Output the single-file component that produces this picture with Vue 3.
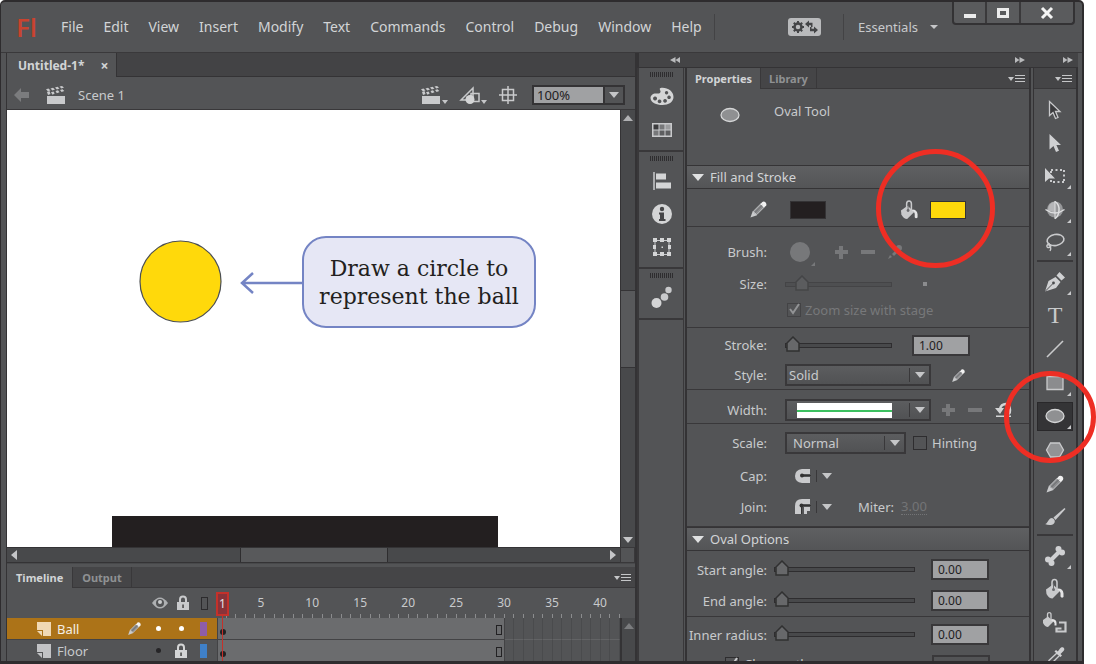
<script setup>
import { ref } from 'vue'

const menus = ['File', 'Edit', 'View', 'Insert', 'Modify', 'Text', 'Commands', 'Control', 'Debug', 'Window', 'Help']

const zoom = ref('100%')
const strokeSize = ref('1.00')
const stroke = ref(0)
const brushSize = ref(10)
const ovalRows = ref([
  { id: 'start-angle', label: 'Start angle:', pos: 0, value: '0.00' },
  { id: 'end-angle', label: 'End angle:', pos: 0, value: '0.00' },
  { id: 'inner-radius', label: 'Inner radius:', pos: 0, value: '0.00' }
])

const L = '#c9cacc'
const icons = {
  clapper: `<path fill="${L}" d="M1 10h18v8H1zM1 6l2.5-.9 1 3L2 9zM5 6.200l2.500-.7 1.200 2L6.500 8.800zM9.500 5l2.500-.7 1.500 2-2.700 1zM14 4l2.500-.7 1.800 1.700L15.600 6zM0 3.200l2.500-.7 2 2-2.700.8zM4.500 2.400l2.500-.6 2 1.800-2.600.8zM9 1.400l2.500-.6 2 1.800-2.600.8zM13.500.6L16 0l2 1.600-2.600.8z"/>`,
  pencil: `<path fill="#8b8c8e" stroke="${L}" d="M4.500 12l8-8 3.500 3.500-8 8z"/><path fill="${L}" d="M1.500 18.500l2.500-7 4.500 4.500z"/><path fill="#f2f2f2" d="M12 4.500l2-2.500a3 3 0 0 1 4 4l-2.300 2z"/><path stroke="#66676a" d="M6 13.500l8-8"/>`,
  bucket: `<path fill="${L}" d="M1 10.500l7-5 7 6.500-7.500 7.500q-3.500 0-6-4.500z"/><path fill="none" stroke="${L}" stroke-width="1.600" d="M7 11V3.500C7-.5 12-.5 12 3.500V10"/><circle cx="8.500" cy="10.500" r="1.500" fill="#6a6b6e"/><path fill="none" stroke="#6a6b6e" d="M8.500 10V4.500"/><path fill="#e4e4e5" d="M13 9.500q5 0 5.500 5v3.500q-2 1.500-3-.5v-3.500q0-2-3-3.500z"/>`,
  palette: `<path fill="#d4d5d6" fill-rule="evenodd" d="M10.500 1C17 0 23.500 4 23.500 10c0 5-5 8-11 8S.5 15.500.5 11c0-3 3-5 6-4.500 2.500.4 4.500-.5 4-2.500-.3-1-1.500-2.300 0-3zM5 9.500a2 2 0 1 0 .1 0zM9.500 12.500a1.900 1.900 0 1 0 .1 0zM15 12a1.900 1.900 0 1 0 .1 0zM19 8.500a1.800 1.800 0 1 0 .1 0zM16.500 4a1.700 1.700 0 1 0 .1 0z"/>`,
  swatches: `<path fill="${L}" d="M2 3h20v14H2z"/><path fill="#3c3c3e" d="M3.500 4.500h5v5h-5z"/><path fill="#77787a" d="M9.500 4.500h5v5h-5zM3.500 10.500h5v5h-5z"/><path fill="#9b9c9e" d="M15.500 4.500h5v5h-5z"/><path fill="#5d5e60" d="M9.500 10.500h5v5h-5zM15.500 10.500h5v5h-5z"/>`,
  align: `<path stroke="${L}" stroke-width="1.500" d="M4 1v18"/><path fill="#d4d5d6" d="M6 2.500h10v6H6zM6 11.500h15v6H6z"/>`,
  info: `<circle cx="12" cy="10" r="10" fill="#d4d5d6"/><circle cx="12" cy="5" r="2.200" fill="#454547"/><path fill="#454547" d="M9 8.500h5v6.500h1.500V17H9v-2h1V10.500H9z"/>`,
  transform: `<path fill="none" stroke="${L}" d="M5 3.500h14v14H5z"/><path fill="#d4d5d6" d="M3 1h4v4H3zM10 1h4v4h-4zM17 1h4v4h-4zM3 8h3v4H3zM18 8h3v4h-3zM3 15h4v4H3zM10 15h4v4h-4zM17 15h4v4h-4zM11.500 9.500h1.500V11h-1.500z"/>`,
  motion: `<circle cx="6.500" cy="15" r="5" fill="#d4d5d6"/><circle cx="14.500" cy="9" r="3.800" fill="${L}"/><circle cx="18.500" cy="2" r="3.200" fill="${L}"/>`,
  subselect: `<path fill="#3b3b3d" stroke="${L}" stroke-width="1.300" d="M4.500 1.500v14l3.500-3 2.500 6 2.500-1-2.500-6H15z"/>`,
  select: `<path fill="#d0d1d3" d="M4.500 1v15.500l4-3.500 2.500 6 3-1.300-2.600-5.700H16z"/>`,
  freeform: `<path fill="none" stroke="${L}" stroke-width="2" stroke-dasharray="2 2.500" d="M6 4h13M19 4v12M19 16H6M6 16V5"/><path fill="#d0d1d3" d="M0 2v14l4-3.500h6z"/>`,
  rotate3d: `<circle cx="10" cy="9.500" r="8" fill="#97989a"/><path fill="#b5b6b8" d="M10 1.500a8 8 0 0 0-7 9l7 2z"/><path fill="none" stroke="#dedfe0" stroke-width="1.300" d="M.5 9.500q9.500 7 19 0"/><path fill="none" stroke="#dedfe0" stroke-width="1.500" d="M10 1.500q4.500 3 4 9-.5 6-4 8"/><path fill="none" stroke="#dedfe0" d="M10 1v18"/>`,
  lasso: `<ellipse cx="10.500" cy="7" rx="8.500" ry="5.500" fill="none" stroke="${L}" stroke-width="1.600" transform="rotate(-10 10.500 7)"/><path fill="none" stroke="${L}" stroke-width="1.400" d="M5 11c-4 0-4 4-1 3.500s2-3.500 0-2.500c2 2 2.500 3.500 1 6"/>`,
  pen: `<path fill="#d0d1d3" d="M0 19.500L3.500 9l7-4 5 5-4.500 6zM11.500 3.500L14.500 0 20 5.500 16.500 8.500z"/><path stroke="#515254" d="M0 19.500l8-8"/><circle cx="8.500" cy="11" r="1.400" fill="#48494b"/>`,
  line: `<path stroke="${L}" stroke-width="1.600" d="M2 18L18 2"/>`,
  rect: `<path fill="#8b8c8e" stroke="${L}" stroke-width="1.300" d="M2 3.500h16v13H2z"/>`,
  oval: `<ellipse cx="10" cy="10" rx="9" ry="6.500" fill="#8f9092" stroke="#d4d5d6" stroke-width="1.300"/>`,
  poly: `<path fill="#929395" stroke="${L}" stroke-width="1.300" d="M1.500 10L5.500 3h9l4 7-4 7h-9z"/>`,
  brush: `<path fill="${L}" d="M0 17c3 0 3-6 7-6 3 1 3.500 4 2 5.500-2 2-6 2-9 .5z"/><path fill="${L}" d="M8.500 10.500L19.500 1 20.500 2 10.500 13z"/>`,
  bone: `<path stroke="#d0d1d3" stroke-width="4" d="M5 15L15 5"/><circle cx="3" cy="13.500" r="3" fill="#d0d1d3"/><circle cx="6.500" cy="17" r="3" fill="#d0d1d3"/><circle cx="13.500" cy="3" r="3" fill="#d0d1d3"/><circle cx="17" cy="6.500" r="3" fill="#d0d1d3"/>`,
  ink: `<path fill="${L}" d="M-2 7l5-3.500 5.500 5-5.500 5.500q-3 0-5-4z"/><path fill="none" stroke="${L}" stroke-width="1.300" d="M2.500 7V1.500c0-2.500 3.500-2.500 3.500 0V7"/><path fill="#e4e4e5" d="M6.500 6q5 0 5 4v2.500h-2V10q-1-2-3-2z"/><path fill="none" stroke="${L}" stroke-width="2.200" d="M14 9.500h6.500v9h-9v-3h5"/>`,
  dropper: `<path fill="none" stroke="${L}" stroke-width="1.400" d="M2 20l2-5.500L12 7l2.500 2.500-8 8z"/><path fill="#d0d1d3" d="M9.500 5.500L11 4l1.800 1.500L15 2.500C17-.5 21 2 18.500 5L15.500 8 17 9.500 15.500 11z"/>`
}

const docks = [
  [['palette', 'Color'], ['swatches', 'Swatches']],
  [['align', 'Align'], ['info', 'Info'], ['transform', 'Transform']],
  [['motion', 'Motion Presets']]
]

const toolGroups = [
  { cls: 'g1', tools: [['subselect', 'Selection'], ['select', 'Subselection'], ['freeform', 'Free Transform', 1], ['rotate3d', '3D Rotation', 1], ['lasso', 'Lasso', 1]] },
  { cls: 'g2', tools: [['pen', 'Pen', 1], ['text', 'Text'], ['line', 'Line'], ['rect', 'Rectangle', 1], ['oval', 'Oval', 1], ['poly', 'PolyStar'], ['pencil', 'Pencil'], ['brush', 'Brush']] },
  { cls: 'g3', tools: [['bone', 'Bone', 1], ['bucket', 'Paint Bucket'], ['ink', 'Ink Bottle'], ['dropper', 'Eyedropper']] }
]
const activeTool = ref('oval')

const frameCount = 42
const frames = Array.from({ length: frameCount }, (_, i) => i + 1)
const layers = [
  { name: 'Ball', active: true, locked: false, color: 'purple' },
  { name: 'Floor', active: false, locked: true, color: 'blue' }
]
</script>

<template>
  <div class="screen">
    <div class="window">
      <header class="titlebar">
        <span class="logo">Fl</span>
        <nav class="menu">
          <button v-for="m in menus" :key="m" type="button">{{ m }}</button>
        </nav>
        <div class="workspace">
          <button class="sync" type="button" aria-label="Sync settings">
            <svg width="28" height="14" viewBox="0 0 28 14">
              <circle cx="7" cy="7" r="3.500" fill="none" stroke="#444547" stroke-width="2.500" />
              <path d="M7 1v2.500M7 10.500V13M1 7h2.500M10.500 7H13M2.800 2.800l1.700 1.700M9.500 9.500l1.700 1.700M11.200 2.800L9.500 4.500M4.500 9.500l-1.700 1.700" stroke="#444547" stroke-width="2" />
              <path d="M14 4l4-3.500v2.300h3.500V7H20V5.200h-2v2.300zM27 10l-4-3.500v2.300h-2.500V7H19v4.200h4v2.300z" fill="#444547" />
            </svg>
          </button>
          <button class="essentials" type="button">Essentials <i class="down small"></i></button>
        </div>
        <div class="winbuttons">
          <button type="button" aria-label="Minimize"><svg width="14" height="14"><path d="M1 8h12v4H1z" fill="#ececec" /></svg></button>
          <button type="button" aria-label="Maximize"><svg width="14" height="14"><path d="M2.500 3.500h9v7h-9z" fill="none" stroke="#ececec" stroke-width="3" /></svg></button>
          <button class="close" type="button" aria-label="Close"><svg width="14" height="14"><path d="M2 2l10 10M12 2L2 12" stroke="#f4f4f4" stroke-width="3" /></svg></button>
        </div>
      </header>

      <div class="body">
        <main class="document">
          <div class="doctabs">
            <div class="doctab">Untitled-1* <button type="button" aria-label="Close document">×</button></div>
          </div>
          <div class="scenebar">
            <svg width="16" height="14" viewBox="0 0 16 14"><path d="M0 7l7-7v4h8v6H7v4z" fill="#7b7c7e" /></svg>
            <svg class="clap" width="20" height="18" viewBox="0 0 20 18" v-html="icons.clapper"></svg>
            <span class="scene">Scene 1</span>
            <button type="button" class="barbtn" aria-label="Edit scene">
              <svg width="20" height="18" viewBox="0 0 20 18" v-html="icons.clapper"></svg><i class="down tiny"></i>
            </button>
            <button type="button" class="barbtn" aria-label="Edit symbols">
              <svg width="20" height="18" viewBox="0 0 20 18">
                <path d="M1 14L13 2v12z" fill="none" stroke="#c9cacc" stroke-width="1.500" />
                <path d="M11 7.500h8v8h-8z" fill="none" stroke="#c9cacc" stroke-width="1.500" />
                <circle cx="10" cy="13.500" r="4.500" fill="#d4d5d6" />
              </svg><i class="down tiny"></i>
            </button>
            <button type="button" class="barbtn center" aria-label="Center stage">
              <svg width="18" height="18" viewBox="0 0 18 18"><path d="M3.500 3.500h11v11h-11zM9 0v18M0 9h18" fill="none" stroke="#c9cacc" stroke-width="1.500" /></svg>
            </button>
            <div class="zoom">
              <input v-model="zoom" type="text" aria-label="Zoom" />
              <button type="button" aria-label="Zoom levels"><i class="down"></i></button>
            </div>
          </div>

          <div class="stagegrid">
            <div class="stage">
              <div class="floor"></div>
              <svg class="ball" width="83" height="83"><circle cx="41.500" cy="41.500" r="40.500" fill="#ffd90b" stroke="#4c4f52" stroke-width="1.200" /></svg>
              <svg class="arrow" width="66" height="24"><path d="M65 12H3M14 2L3 12l11 10" fill="none" stroke="#7484c4" stroke-width="2.500" /></svg>
              <p class="callout">Draw a circle to<br />represent the ball</p>
            </div>
            <div class="vscroll">
              <i class="up"></i><div class="vthumb"></div><i class="down"></i>
            </div>
            <div class="hscroll">
              <i class="left"></i><div class="hthumb"></div><i class="right"></i>
            </div>
            <div class="corner"></div>
          </div>

          <section class="timeline">
            <div class="paneltabs">
              <button type="button" class="on">Timeline</button>
              <button type="button">Output</button>
              <button type="button" class="flyout" aria-label="Timeline menu"><i class="down tiny"></i><i class="lines"></i></button>
            </div>
            <div class="tlgrid">
              <div class="layerhead">
                <svg width="16" height="12" viewBox="0 0 16 12"><path d="M0 6q8-11 16 0-8 11-16 0z" fill="#aeb0b2" /><circle cx="8" cy="6" r="4" fill="#535456" /><circle cx="8" cy="5" r="2" fill="#c9cacc" /></svg>
                <svg class="headlock" width="14" height="16" viewBox="0 0 14 16"><path d="M4 8V4.500q0-3 3-3t3 3V8" fill="none" stroke="#c9cacc" stroke-width="2" /><path d="M1 7h12v8H1z" fill="#c9cacc" /><path d="M6.300 9.500h1.500v3.500H6.300z" fill="#444" /></svg>
                <span class="outline"></span>
              </div>
              <div class="ruler">
                <span v-for="f in frames" :key="f" class="tick"><span v-if="f % 5 === 0">{{ f }}</span></span>
                <span class="playhead">1</span>
              </div>
              <div class="rulerend"></div>
              <template v-for="l in layers" :key="l.name">
                <div class="layer" :class="{ active: l.active }">
                  <svg width="16" height="16" viewBox="0 0 16 16"><path d="M1 1h14v14H7V9H1z" :fill="l.active ? '#f0d9b5' : '#c2c3c5'" /><path d="M1 10h5v5z" :fill="l.active ? '#f0d9b5' : '#c2c3c5'" /></svg>
                  <span class="lname">{{ l.name }}</span>
                  <svg v-if="l.active" class="lpencil" width="15" height="15" viewBox="0 0 20 20" v-html="icons.pencil"></svg>
                  <i class="dot" :class="{ dark: !l.active }"></i>
                  <svg v-if="l.locked" class="lock" width="14" height="16" viewBox="0 0 14 16"><path d="M4 8V4.500q0-3 3-3t3 3V8" fill="none" stroke="#d4d5d6" stroke-width="2" /><path d="M1 7h12v8H1z" fill="#d4d5d6" /><path d="M6.300 9.500h1.500v3.500H6.300z" fill="#444" /></svg>
                  <span v-else class="lock"><i class="dot"></i></span>
                  <i class="chip" :class="l.color"></i>
                </div>
                <div class="frames">
                  <span v-for="f in frames" :key="f" class="cell" :style="{ gridColumn: f }"></span>
                  <div class="span"><i class="key"></i><i class="lastkey"></i></div>
                </div>
                <div class="tlscroll"><i v-if="l.active" class="up dim"></i></div>
              </template>
            </div>
          </section>
        </main>

        <div class="side">
          <div class="collapse">
            <i class="chev back dockchev"></i><i class="chev propchev"></i><i class="chev toolchev"></i>
          </div>
          <div class="columns">
            <div class="dock">
              <div v-for="(g, i) in docks" :key="i" class="dockgroup">
                <i class="grip"></i>
                <button v-for="[id, name] in g" :key="id" type="button" :aria-label="name">
                  <svg width="24" height="20" viewBox="0 0 24 20" v-html="icons[id]"></svg>
                </button>
              </div>
            </div>

            <section class="props">
              <div class="paneltabs">
                <button type="button" class="on">Properties</button>
                <button type="button">Library</button>
                <button type="button" class="flyout" aria-label="Panel menu"><i class="down tiny"></i><i class="lines"></i></button>
              </div>
              <div class="toolname">
                <svg width="20" height="20" viewBox="0 0 20 20" v-html="icons.oval"></svg>
                <span>Oval Tool</span>
              </div>

              <h2><i class="down big"></i>Fill and Stroke</h2>
              <div class="block colors">
                <svg width="19" height="19" viewBox="0 0 20 20" v-html="icons.pencil"></svg>
                <button type="button" class="swatch black" aria-label="Stroke color"></button>
                <svg class="fillicon" width="19" height="20" viewBox="0 0 20 20" v-html="icons.bucket"></svg>
                <button type="button" class="swatch yellow" aria-label="Fill color"></button>
              </div>

              <div class="block brushes">
                <div class="row">
                  <span class="lab">Brush:</span>
                  <svg class="brushicons" width="122" height="26" viewBox="0 0 122 26" fill="#77787a">
                    <circle cx="15" cy="13" r="10" /><path d="M30 23v4h-4z" />
                    <path d="M50 11h4V7h4v4h5v4h-5v5h-4v-5h-4zM76 11h14v4H76z" />
                    <circle cx="114" cy="9" r="3" /><path d="M103 20l2-4 2 2zM107 15l4-4 2 2-4 4z" />
                  </svg>
                </div>
                <div class="row">
                  <label class="lab" for="bsize">Size:</label>
                  <input id="bsize" v-model="brushSize" class="range short faded" type="range" disabled />
                  <i class="sizedot"></i>
                </div>
                <label class="check zoomcheck"><input type="checkbox" checked disabled /><svg width="14" height="14"><path d="M3 6l3 4 6-9" fill="none" stroke="#929395" stroke-width="2" /></svg>Zoom size with stage</label>
              </div>

              <div class="block strokes">
                <div class="row">
                  <label class="lab" for="stroke">Stroke:</label>
                  <input id="stroke" v-model="stroke" class="range short" type="range" />
                  <input v-model="strokeSize" class="num" type="text" aria-label="Stroke size" />
                </div>
                <div class="row">
                  <label class="lab" for="style">Style:</label>
                  <div class="select w1"><select id="style"><option>Solid</option></select><i class="down"></i></div>
                  <svg class="editstyle" width="15" height="15" viewBox="0 0 20 20" v-html="icons.pencil"></svg>
                </div>
              </div>

              <div class="block widths">
                <div class="row">
                  <span class="lab">Width:</span>
                  <button type="button" class="select w1 profile" aria-label="Width profile"><span class="preview"></span><i class="down"></i></button>
                  <svg class="widthicons" width="72" height="16" viewBox="0 0 72 16">
                    <path d="M1 6h4V2h4v4h5v4H9v4H5v-4H1zM27 6h14v4H27z" fill="#77787a" />
                    <path d="M59 7q1-5 6-5 4 1 4 6t-3 3" fill="none" stroke="#d4d5d6" stroke-width="2.500" />
                    <path d="M54 6h9l-4 6zM55 13.500h15v1.500H55z" fill="#d4d5d6" />
                  </svg>
                </div>
              </div>

              <div class="block scales">
                <div class="row">
                  <label class="lab" for="scale">Scale:</label>
                  <div class="select w2"><select id="scale"><option>Normal</option></select><i class="down"></i></div>
                  <label class="check"><input type="checkbox" />Hinting</label>
                </div>
                <div class="row">
                  <span class="lab">Cap:</span>
                  <button type="button" class="shape" aria-label="Cap">
                    <svg width="16" height="14"><path d="M15 0v5H7v3h8v6H7Q0 13 0 7t7-7z" fill="#c9cacc" /><path d="M7 6.500h9" stroke="#333" /><circle cx="7" cy="6.500" r="2" fill="#333" /></svg>
                    <i class="bar"></i><i class="down"></i>
                  </button>
                </div>
                <div class="row">
                  <span class="lab">Join:</span>
                  <button type="button" class="shape" aria-label="Join">
                    <svg width="16" height="15"><path d="M0 15V7q0-7 7-7h8v5H7v10zM9 8h6v4h-3v3H9z" fill="#c9cacc" /><path d="M6.500 15V6.500H16" fill="none" stroke="#333" /><circle cx="6.500" cy="6.500" r="2" fill="#333" /></svg>
                    <i class="bar"></i><i class="down"></i>
                  </button>
                  <span class="miter">Miter:</span><span class="mval">3.00</span>
                </div>
              </div>

              <h2><i class="down big"></i>Oval Options</h2>
              <div class="ovals">
                <div v-for="r in ovalRows" :key="r.id" class="row" :class="r.id">
                  <label class="lab" :for="r.id">{{ r.label }}</label>
                  <input :id="r.id" v-model="r.pos" class="range" type="range" />
                  <input v-model="r.value" class="num" type="text" :aria-label="r.label" />
                </div>
                <div class="row last">
                  <label class="check"><input type="checkbox" checked /><svg width="14" height="14"><path d="M3 6l3 4 6-9" fill="none" stroke="#c9cacc" stroke-width="2" /></svg>Close path</label>
                  <button type="button" class="reset">Reset</button>
                </div>
              </div>
            </section>

            <aside class="tools">
              <div class="paneltabs"><button type="button" class="flyout" aria-label="Tools menu"><i class="down tiny"></i><i class="lines"></i></button></div>
              <div v-for="g in toolGroups" :key="g.cls" class="toolgroup" :class="g.cls">
                <button v-for="[id, name, more] in g.tools" :key="id" type="button" :class="{ on: id === activeTool }" :aria-label="name" @click="activeTool = id">
                  <span v-if="id === 'text'" class="tee">T</span>
                  <svg v-else width="20" height="20" viewBox="0 0 20 20" v-html="icons[id]"></svg>
                  <i v-if="more" class="more"></i>
                </button>
              </div>
            </aside>
          </div>
        </div>
      </div>
    </div>
    <div class="ring fillring"></div>
    <div class="ring toolring"></div>
  </div>
</template>

<style>
html, body { margin: 0; background: #fff; }
</style>

<style scoped>
* { box-sizing: border-box; }
.screen { position: relative; height: 100vh; padding-right: 12px; overflow: hidden; font: 13px/18px "Noto Sans", "Open Sans", sans-serif; color: #c8cacc; }
button { margin: 0; padding: 0; border: 0; background: none; color: inherit; font: inherit; }
input, select { margin: 0; font: inherit; color: inherit; border-radius: 0; }
svg { display: block; flex: none; overflow: visible; }
i { display: block; flex: none; }
.window { height: 100%; display: flex; flex-direction: column; background: #535456; border: solid #2e2c2e; border-width: 2px 2px 3px 1px; border-radius: 5px 5px 0 0; overflow: hidden; }

.down, .up, .left, .right { width: 0; height: 0; border: 5px solid transparent; }
.down { border-top: 6px solid #c5c6c8; border-bottom: 0; }
.up { border-bottom: 6px solid #b0b1b3; border-top: 0; }
.up.dim { border-bottom-color: #7b7c7e; }
.left { border-right: 6px solid #c5c6c8; border-left: 0; }
.right { border-left: 6px solid #c5c6c8; border-right: 0; }
.down.small { border-width: 4px 4px 0; }
.down.tiny { border-width: 4px 3px 0; }
.down.big { border-width: 7px 6px 0; border-top-color: #e0e1e2; }

.titlebar { flex: none; height: 51px; display: flex; align-items: center; padding-left: 15px; border-bottom: 1px solid #3a393b; }
.logo { width: 45px; font: 26px/30px "Open Sans", sans-serif; color: #c9432f; font-weight: 600; }
.menu { display: flex; gap: 20px; font-size: 14px; color: #d2d4d6; }
.workspace { margin-left: auto; display: flex; align-items: center; height: 26px; padding-left: 73px; border-left: 1px solid #434345; }
.sync { width: 33px; height: 18px; display: grid; place-items: center; border-radius: 3px; background: #b9babc; }
.essentials { height: 26px; margin-left: 22px; padding-left: 14px; border-left: 1px solid #434345; display: flex; align-items: center; gap: 12px; }
.winbuttons { align-self: flex-start; display: flex; width: 123px; height: 23px; margin: 0 7px 0 14px; border: 2px solid #333234; border-top: 0; border-radius: 0 0 4px 4px; background: #5a5b5d; }
.winbuttons button { flex: 33; display: grid; place-items: center; border-right: 2px solid #3a393b; }
.winbuttons .close { flex: 55; border: 0; }

.body { flex: 1; min-height: 0; display: flex; padding: 0 4px 0 5px; }
.document { flex: 1; min-width: 0; display: flex; flex-direction: column; border: solid #343335; border-width: 0 2px 0 1px; }
.doctabs { flex: none; height: 24px; display: flex; background: #434345; border-bottom: 1px solid #343335; }
.doctab { height: 24px; display: flex; align-items: center; gap: 16px; padding: 2px 8px 0 11px; background: #535456; border-right: 1px solid #343335; font-size: 12px; font-weight: 700; color: #d2d4d6; }
.doctab button { font-size: 14px; }
.scenebar { flex: none; height: 33px; display: flex; align-items: center; padding: 3px 10px 0 7px; border-bottom: 1px solid #39383a; }
.clap { margin-left: 16px; }
.scene { flex: 1; margin-left: 12px; }
.barbtn { display: flex; align-items: flex-end; gap: 1px; margin-right: 12px; }
.barbtn.center { margin-right: 15px; }
.zoom { display: flex; width: 93px; height: 20px; border: 2px solid #343335; }
.zoom input { width: 71px; min-width: 0; padding: 0 3px; border: 0; border-right: 2px solid #343335; background: #a0a1a3; color: #1f2022; }
.zoom button { flex: 1; display: grid; place-items: center; }

.stagegrid { flex: 1; min-height: 0; display: grid; grid-template: 1fr 16px / 1fr 15px; }
.stage { position: relative; background: #fff; overflow: hidden; }
.ball { position: absolute; left: 132px; top: 130px; }
.floor { position: absolute; left: 105px; bottom: 0; width: 386px; height: 31px; background: #231f20; }
.arrow { position: absolute; left: 232px; top: 161px; }
.callout { position: absolute; left: 295px; top: 126px; width: 234px; height: 92px; margin: 0; padding-top: 17px; border: 2px solid #7484c4; border-radius: 24px; background: #e6e7f5; text-align: center; font: 22px/28px "DejaVu Serif", serif; color: #231f20; white-space: nowrap; }
.vscroll { display: flex; flex-direction: column; align-items: center; padding: 5px 0 4px; background: #48494b; border-left: 1px solid #343335; }
.vthumb { width: 100%; height: 78px; margin: auto 0; background: #58595b; border: 1px solid #343335; border-width: 1px 0; }
.hscroll { display: flex; align-items: center; padding: 0 4px; background: #48494b; border: solid #343335; border-width: 1px 0; }
.hthumb { height: 100%; width: 148px; margin: 0 auto; background: #58595b; border: solid #2e2d2f; border-width: 0 1px; }
.corner { border: 1px solid #39383a; }

.timeline { flex: none; height: 98px; padding-top: 3px; border-top: 1px solid #48494b; overflow: hidden; }
.paneltabs { display: flex; height: 21px; background: #454547; border-bottom: 1px solid #39383a; font-size: 11px; font-weight: 700; }
.paneltabs button { padding: 0 9px; border-right: 1px solid #39383a; color: #8f9193; height: 21px; font-weight: 700; }
.paneltabs .on { background: #535456; color: #d2d4d6; }
.paneltabs .flyout { margin-left: auto; padding: 0 4px; border: 0; display: flex; align-items: center; gap: 1px; }
.lines { width: 10px; height: 9px; background: repeating-linear-gradient(#c5c6c8 0 1px, transparent 1px 3px); background-position: 0 1px; }
.tlgrid { display: grid; grid-template: 30px 22px 22px / 210px 1fr 15px; }
.layerhead { display: flex; align-items: center; padding-left: 145px; }
.headlock { margin-left: 8px; }
.outline { width: 7px; height: 13px; margin-left: 11px; border: 1px solid #2c2b2d; }
.ruler, .frames { display: grid; grid-template-columns: repeat(42, 1fr); position: relative; }
.tick { display: flex; align-items: center; min-width: 0; padding-left: 2px; font-size: 12px; white-space: nowrap; background: linear-gradient(#8b8c8e, #8b8c8e) right bottom / 1px 4px no-repeat; }
.playhead { position: absolute; left: -1px; top: 4px; width: 13px; height: 24px; border: 2px solid #c4312a; background: #883339; text-align: center; font-size: 12px; line-height: 20px; color: #e4e4e5; z-index: 3; }
.playhead::after { content: ""; position: absolute; left: 4px; top: 22px; width: 1px; height: 60px; background: #c4312a; }
.layer { display: flex; align-items: center; padding-left: 29px; border-bottom: 1px solid #434345; }
.layer.active { background: #ac7318; color: #f4efe6; }
.lname { flex: 1; margin-left: 5px; }
.lpencil { margin-right: 14px; }
.dot { width: 5px; height: 5px; border-radius: 50%; background: #fff; }
.dot.dark { background: #262527; }
.lock { width: 14px; margin-left: 13px; display: grid; place-items: center; }
.chip { width: 7px; height: 14px; margin: 0 10px 0 12px; }
.purple { background: #8e5da8; }
.blue { background: #3f80c8; }
.cell { grid-row: 1; border-right: 1px solid #4a4b4d; border-bottom: 1px solid #626365; }
.span { grid-area: 1 / 1 / 2 / 31; display: flex; align-items: flex-end; justify-content: space-between; padding: 0 2px 4px; background: #6b6c6e; border: solid #434345; border-width: 0 1px 1px; z-index: 1; }
.key { width: 6px; height: 6px; border-radius: 50%; background: #222123; }
.lastkey { width: 6px; height: 10px; border: 1px solid #222123; }
.tlscroll { display: grid; justify-items: center; padding-top: 5px; background: #48494b; border-left: 2px solid #343335; }

.side { flex: none; display: flex; flex-direction: column; width: 441px; }
.collapse { flex: none; display: flex; align-items: center; height: 15px; background: #444446; border-bottom: 1px solid #343335; border-left: 2px solid #343335; }
.chev { width: 10px; height: 6px; background: #b9babc; clip-path: polygon(0 0, 45% 50%, 45% 0, 100% 50%, 45% 100%, 45% 50%, 0 100%); }
.back { clip-path: polygon(100% 0, 55% 50%, 55% 0, 0 50%, 55% 100%, 55% 50%, 100% 100%); }
.dockchev { margin-left: 31px; }
.propchev { margin-left: auto; }
.toolchev { margin: 0 5px 0 38px; }
.columns { flex: 1; min-height: 0; display: flex; }
.dock { width: 47px; border: solid #39383a; border-width: 0 1px 0 2px; }
.dockgroup { display: flex; flex-direction: column; align-items: center; border-bottom: 2px solid #39383a; padding: 4px 0 4px 2px; }
.dockgroup button { height: 33px; width: 40px; display: grid; place-items: center; }
.grip { width: 24px; height: 5px; margin-bottom: 3px; background: repeating-linear-gradient(90deg, #2e2d2f 0 1px, transparent 1px 2px); }

.props { width: 346px; margin-left: 1px; border: solid #343335; border-width: 0 2px; overflow: hidden; display: flex; flex-direction: column; }
.props > * { flex: none; }
.props .paneltabs button { padding: 0 8px; }
.props .paneltabs .flyout, .tools .paneltabs .flyout { margin-left: auto; padding: 0 4px; border: 0; }
.toolname { height: 76px; display: flex; align-items: flex-start; gap: 34px; padding: 13px 33px; }
.toolname svg { margin-top: 3px; }
h2 { display: flex; align-items: center; gap: 6px; height: 24px; margin: 0; padding: 0 5px; font-size: 13px; font-weight: 400; background: linear-gradient(#5f6062, #545557); border: solid #353436; border-width: 1px 0; color: #d2d4d6; }
.block { border-bottom: 1px solid #39383a; }
.colors { height: 38px; display: flex; align-items: center; padding: 4px 0 0 62px; }
.colors svg { margin-right: 22px; }
.swatch { width: 36px; height: 18px; border: 1px solid #343335; }
.swatch.black { background: #231f20; }
.swatch.yellow { background: #ffd90b; }
.colors .fillicon { margin: 0 11px 0 74px; }
.row { display: flex; align-items: center; }
.lab { flex: none; width: 80px; text-align: right; white-space: nowrap; }
.range { appearance: none; width: 141px; height: 20px; margin-left: 7px; background: none; }
.range.short { width: 107px; margin-left: 18px; }
.range::-webkit-slider-runnable-track { height: 5px; border: 1px solid #2e2d2f; background: #48494b; }
.range::-webkit-slider-thumb { appearance: none; width: 14px; height: 16px; margin-top: -8px; background: url("data:image/svg+xml,%3Csvg xmlns='http://www.w3.org/2000/svg' width='14' height='16'%3E%3Cpath d='M1 15V7l6-6 6 6v8z' fill='%2367686a' stroke='%23303031' stroke-width='1.500'/%3E%3C/svg%3E"); }
.faded { opacity: .4; }
.num { width: 58px; height: 21px; padding: 0 5px; border: 2px solid #39383a; background: #a0a1a3; color: #1f2022; font-size: 12px; }
.short + .num { margin-left: 20px; }
.ovals .num { margin-left: 16px; }
.brushes { height: 101px; padding-top: 9px; }
.brushes .row { height: 32px; }
.brushicons { margin-left: 18px; }
.sizedot { width: 4px; height: 4px; margin-left: 31px; background: #8b8c8e; }
.check { position: relative; display: flex; align-items: center; gap: 5px; }
.check input { appearance: none; width: 14px; height: 14px; border: 1px solid #2e2d2f; }
.check svg { position: absolute; left: 0; }
.zoomcheck { margin: 0 0 0 100px; gap: 4px; height: 20px; color: #77787a; }
.zoomcheck input { border-color: #434345; }
.strokes { height: 62px; padding-top: 2px; }
.strokes .row { height: 30px; }
.select { position: relative; display: flex; align-items: center; height: 22px; margin-left: 18px; border: 2px solid #39383a; background: linear-gradient(#5c5d5f, #515254); }
.w1 { width: 146px; }
.w2 { width: 121px; margin-right: 7px; }
.select select { appearance: none; flex: 1; align-self: stretch; padding: 0 2px; border: 0; background: none; line-height: 16px; }
.w2 select { padding-left: 6px; }
.select .down { position: absolute; right: 4px; }
.select::after { content: ""; position: absolute; right: 19px; top: 2px; bottom: 2px; width: 1px; background: #39383a; }
.editstyle { margin-left: 20px; }
.widths { height: 34px; }
.widths .row { height: 40px; }
.preview { width: 95px; height: 15px; margin-left: 10px; background: linear-gradient(#fff 7px, #3cc060 7px 9px, #fff 9px); }
.widthicons { margin-left: 10px; }
.scales { height: 103px; padding-top: 2px; }
.scales .row { height: 33px; }
.scales .row:last-child { height: 29px; }
.shape { display: flex; align-items: center; margin-left: 28px; }
.bar { width: 1px; height: 12px; margin: 0 5px; background: #39383a; }
.miter { margin-left: 26px; }
.mval { margin-left: 7px; color: #737476; border-bottom: 1px dotted #737476; line-height: 16px; }
.ovals .row { height: 31px; }
.ovals { padding-top: 3px; }
.ovals .inner-radius { height: 36px; border-top: 1px solid #39383a; }
.ovals .last { padding: 3px 0 0 38px; align-items: flex-start; }
.reset { width: 58px; height: 22px; margin-left: 110px; border: 2px solid #39383a; font-size: 12px; line-height: 18px; }
.last .check { width: 97px; white-space: nowrap; }

.tools { flex: 1; margin-left: 2px; border: solid #343335; border-width: 0 2px 0 1px; overflow: hidden; }
.tools .paneltabs { margin-bottom: 4px; }
.toolgroup { display: grid; grid-auto-rows: 1fr; margin: 0 3px; }
.toolgroup button { position: relative; display: grid; place-items: center; margin: 2px 0; border: 1px solid transparent; }
.toolgroup .on { background: #343436; border-color: #29282a; }
.g1 { height: 169px; border-bottom: 2px solid #39383a; }
.g2 { height: 274px; padding-top: 3px; border-bottom: 2px solid #39383a; }
.g3 { height: 137px; padding-top: 3px; }
.tee { font: 24px/24px "Liberation Serif", serif; }
.more { position: absolute; right: 1px; bottom: 1px; border: 2px solid transparent; border-right-color: #c9cacc; border-bottom-color: #c9cacc; }

.ring { position: absolute; border: 5px solid #ee2e24; border-radius: 50%; pointer-events: none; }
.fillring { right: 101px; top: 149px; width: 119px; height: 119px; }
.toolring { right: 0; top: 371px; width: 92px; height: 92px; }
</style>
